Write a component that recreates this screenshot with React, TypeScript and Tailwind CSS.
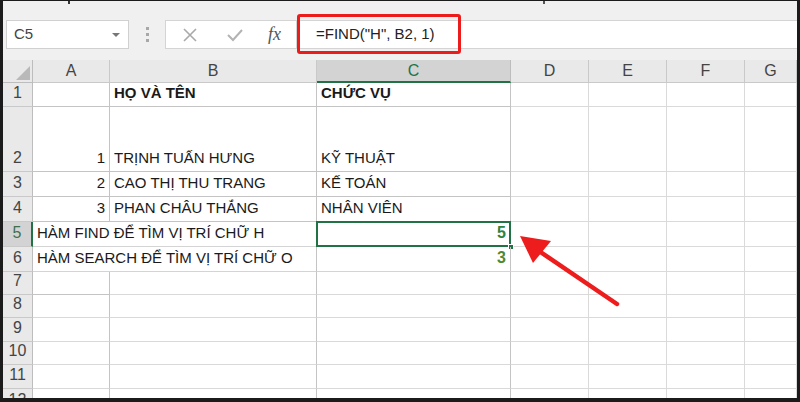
import React from "react";

const font = { fontFamily: '"Liberation Sans", Arial, sans-serif' };

const cols = ["A", "B", "C", "D", "E", "F", "G"];
const colW = ["w-[77px]", "w-[207px]", "w-[194px]", "w-[78px]", "w-[78px]", "w-[78px]", "w-[52px]"];

type Row = { n: string; h: string; cells?: (string | null)[]; merged?: string; value?: string; valueColor?: string; sel?: boolean; cut?: boolean };

const rows: Row[] = [
    { n: "1", h: "h-[24px]", cells: ["", "HỌ VÀ TÊN", "CHỨC VỤ"] },
    { n: "2", h: "h-[65px]", cells: ["1", "TRỊNH TUẤN HƯNG", "KỸ THUẬT"] },
    { n: "3", h: "h-[25px]", cells: ["2", "CAO THỊ THU TRANG", "KẾ TOÁN"] },
    { n: "4", h: "h-[25px]", cells: ["3", "PHAN CHÂU THẮNG", "NHÂN VIÊN"] },
    { n: "5", h: "h-[25px]", merged: "HÀM FIND ĐỂ TÌM VỊ TRÍ CHỮ H", value: "5", valueColor: "text-[#2d8440]", sel: true },
    { n: "6", h: "h-[25px]", merged: "HÀM SEARCH ĐỂ TÌM VỊ TRÍ CHỮ O", value: "3", valueColor: "text-[#4f8a32]" },
    { n: "7", h: "h-[23px]" },
    { n: "8", h: "h-[23px]" },
    { n: "9", h: "h-[24px]" },
    { n: "10", h: "h-[23px]" },
    { n: "11", h: "h-[24px]" },
    { n: "12", h: "h-[14px]", cut: true },
];

const RowHeader = ({ n, active, cut }: { n: string; active?: boolean; cut?: boolean }) => (
    <div
        className={
            "w-[30px] shrink-0 flex justify-center text-[16px] border-b border-[#c9c9c9] overflow-hidden " +
            (cut ? "items-start pt-[3px] leading-none " : "items-end pb-[1px] ") +
            (active
                ? "bg-[#d3d3d3] text-[#3f6f4f] border-r-2 border-r-[#217346]"
                : "bg-[#e9e9e9] text-[#444] border-r border-r-[#bdbdbd]")
        }
    >
        {n}
    </div>
);

const App = () => {
    return (
        <div
            className="relative w-[800px] h-[402px] overflow-hidden bg-white border-t border-l-[3px] border-r-[3px] border-b-4 border-[#1b1b1b]"
            style={font}
        >
            {/* toolbar */}
            <div className="relative h-[59px] bg-[#f0f0f0] flex items-start pt-[19px] pl-[3px]">
                <div className="absolute left-[65px] top-0 w-[2px] h-[3px] bg-[#333]" />
                <div className="absolute left-[540px] top-0 w-[2px] h-[3px] bg-[#555]" />
                <div className="w-[123px] h-[29px] bg-white border border-[#d0d0d0] flex items-center justify-between pl-[7px] pr-[8px]">
                    <span className="text-[15px] text-[#444]">C5</span>
                    <span className="w-0 h-0 border-l-[4px] border-r-[4px] border-t-[4px] border-l-transparent border-r-transparent border-t-[#777]" />
                </div>
                <div className="w-[36px] h-[29px] flex flex-col items-center justify-center gap-[3px]">
                    <span className="w-[3px] h-[3px] bg-[#a8a8a8]" />
                    <span className="w-[3px] h-[3px] bg-[#a8a8a8]" />
                    <span className="w-[3px] h-[3px] bg-[#a8a8a8]" />
                </div>
                <div className="w-[131px] h-[29px] bg-white border border-[#d4d4d4] border-r-0 flex items-center">
                    <svg className="ml-[16px]" width="16" height="16" viewBox="0 0 16 16" stroke="#a9a9a9" strokeWidth="1.6" fill="none">
                        <path d="M2 2 L14 14 M14 2 L2 14" />
                    </svg>
                    <svg className="ml-[28px]" width="18" height="16" viewBox="0 0 18 16" stroke="#b3b3b3" strokeWidth="2" fill="none">
                        <path d="M2 8 L7 13 L16 3" />
                    </svg>
                    <span
                        className="ml-[24px] text-[18px] italic text-[#555]"
                        style={{ fontFamily: '"Liberation Serif", "Times New Roman", serif' }}
                    >
                        fx
                    </span>
                </div>
                <div className="flex-1 h-[29px] bg-white border border-[#d4d4d4] border-r-0 flex items-center pl-[19px]">
                    <span className="text-[15px] text-[#222]">=FIND("H", B2, 1)</span>
                </div>
                <div className="absolute left-[294px] top-[13px] w-[164px] h-[40px] border-[3px] border-[#ec1c1c] rounded-[3px]" />
            </div>

            {/* column headers */}
            <div className="flex h-[23px]">
                <div className="relative w-[30px] shrink-0 bg-[#e9e9e9] border-r border-b border-[#bdbdbd]">
                    <svg className="absolute right-[2px] bottom-[2px]" width="14" height="14" viewBox="0 0 14 14">
                        <path d="M14 0 L14 14 L0 14 Z" fill="#b9b9b9" />
                    </svg>
                </div>
                {cols.map((c, i) => (
                    <div
                        key={c}
                        className={
                            colW[i] +
                            " shrink-0 flex items-center justify-center text-[16px] " +
                            (c === "C"
                                ? "bg-[#d3d3d3] text-[#217346] border-b-2 border-[#217346] border-r border-r-[#bdbdbd]"
                                : "bg-[#e9e9e9] text-[#444] border-b border-[#c9c9c9] border-r border-r-[#c9c9c9]")
                        }
                    >
                        {c}
                    </div>
                ))}
            </div>

            {/* rows */}
            {rows.map((r) => (
                <div key={r.n} className={"flex " + r.h}>
                    <RowHeader n={r.n} active={r.sel} cut={r.cut} />
                    {r.merged !== undefined ? (
                        <>
                            <div className="w-[284px] shrink-0 flex items-end pl-[4px] pb-[2px] text-[15px] text-[#1a1a1a] border-b border-[#d4d4d4] border-r border-r-[#c4c4c4] whitespace-nowrap">
                                {r.merged}
                            </div>
                            <div className="relative w-[194px] shrink-0 flex items-end justify-end pr-[4px] pb-[1px] border-b border-[#d4d4d4] border-r border-r-[#c4c4c4]">
                                <span className={"text-[16px] font-bold " + r.valueColor}>{r.value}</span>
                                {r.sel ? (
                                    <>
                                        <div className="absolute -left-[1px] -top-[1px] -right-[1px] -bottom-[1px] border-2 border-[#217346]" />
                                        <div className="absolute -right-[4px] -bottom-[4px] w-[6px] h-[6px] bg-[#217346] border border-white" />
                                    </>
                                ) : null}
                            </div>
                        </>
                    ) : (
                        [0, 1, 2].map((i) => {
                            const t = r.cells ? r.cells[i] : "";
                            const inTable = !!r.cells || (r.n === "7" && i === 0);
                            return (
                                <div
                                    key={i}
                                    className={
                                        colW[i] +
                                        " shrink-0 flex items-end pb-[2px] text-[15px] text-[#1a1a1a] border-r border-b " +
                                        (i === 0 ? "justify-end pr-[4px] " : "pl-[4px] ") +
                                        (r.n === "1" ? "font-bold " : "") +
                                        (inTable ? "border-[#c4c4c4]" : "border-[#d9d9d9] border-r-[#c4c4c4]")
                                    }
                                >
                                    {t}
                                </div>
                            );
                        })
                    )}
                    {[3, 4, 5, 6].map((i) => (
                        <div key={i} className={colW[i] + " shrink-0 border-r border-b border-[#dadada]"} />
                    ))}
                </div>
            ))}

            {/* red arrow */}
            <svg className="absolute left-0 top-0 pointer-events-none" width="800" height="402" viewBox="0 0 800 402">
                <line x1="614" y1="303" x2="536" y2="250" stroke="#ee1d1d" strokeWidth="4.5" strokeLinecap="round" />
                <path d="M517 235 L548 240 L530 262 Z" fill="#ee1d1d" />
            </svg>
        </div>
    );
};

export default App;
